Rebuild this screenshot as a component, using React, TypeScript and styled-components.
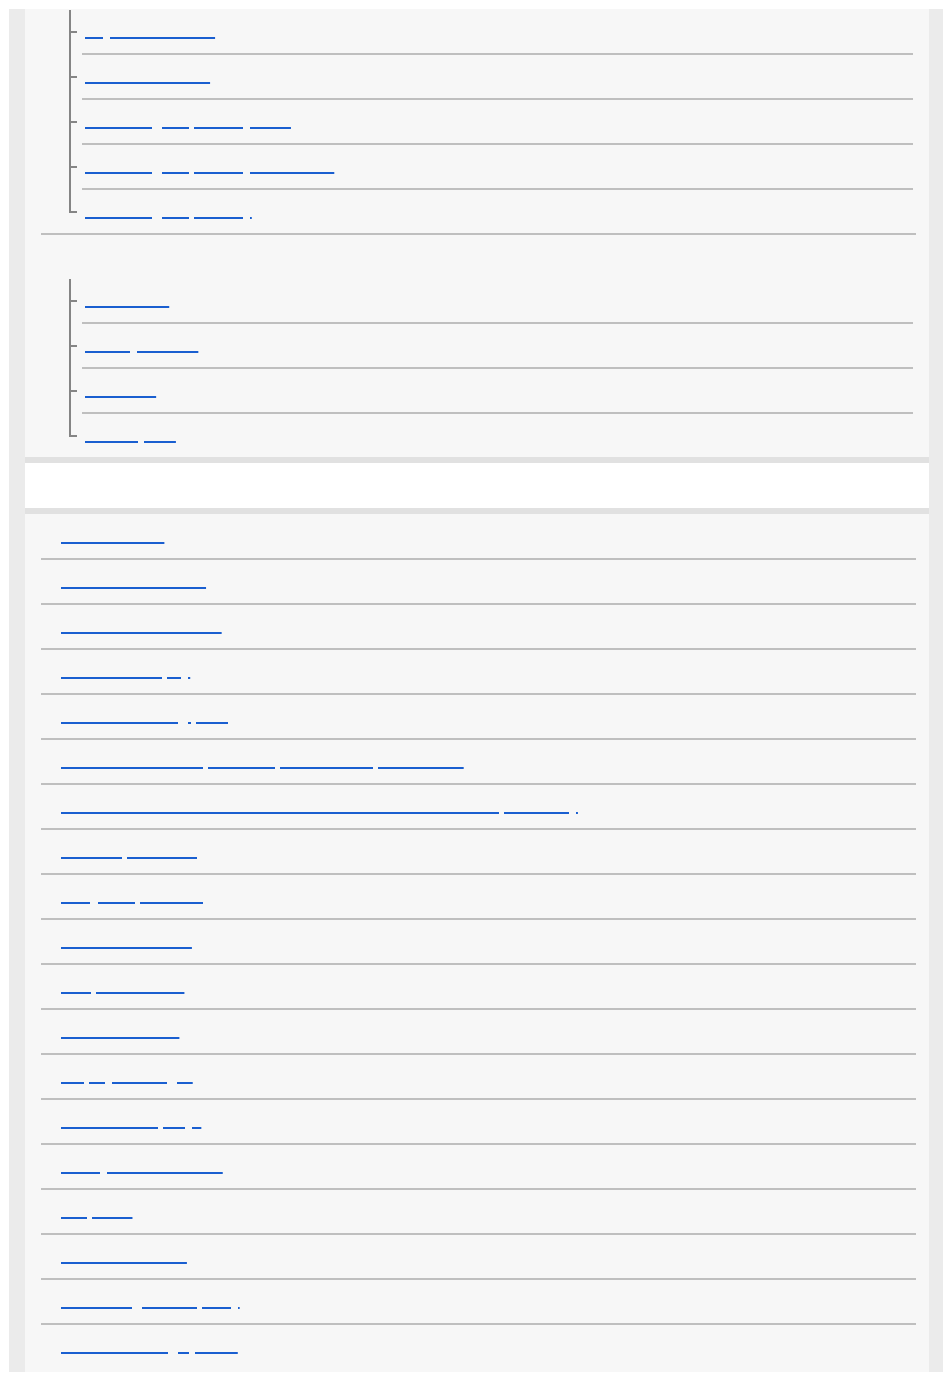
import React from "react";
import styled, { createGlobalStyle } from "styled-components";

const GlobalStyle = createGlobalStyle`
  html, body { background: #ffffff; }
  body {
    margin: 9px 7px 7px 9px;
    font-family: "Liberation Sans", Arial, sans-serif;
  }
  ul { list-style: none; margin: 0; padding: 0; }
`;

const Page = styled.div`
  background: #ebebeb;
  padding: 0 14px 0 16px;
`;

const Panel = styled.section<{ $pt?: number; $pb?: number }>`
  background: #f7f7f7;
  padding: ${(p) => p.$pt ?? 0}px 0 ${(p) => p.$pb ?? 0}px;
`;

const Band = styled.div`
  background: #ffffff;
  border-top: 6px solid #e1e1e1;
  border-bottom: 6px solid #e1e1e1;
  height: 45px;
  box-sizing: content-box;
  padding: 0 36px;
  font-size: 16px;
  line-height: 45px;
  font-weight: bold;
  color: transparent;
`;

const GroupList = styled.ul`
  margin: 0 13px 0 16px !important;
`;

const Group = styled.li`
  border-bottom: 2px solid #bfbfbf;
  &:last-child { border-bottom: none; }
`;

const GroupTitle = styled.div`
  padding: 11px 20px;
  font-size: 15px;
  line-height: 22px;
  font-weight: bold;
  color: transparent;
`;

const Tree = styled.ul`
  margin: 0 3px 0 28px !important;
`;

const TreeItem = styled.li`
  position: relative;
  margin-left: 13px;
  padding: 10px 0 11px 3px;
  line-height: 22px;
  border-bottom: 2px solid #bfbfbf;
  &:last-child { border-bottom: none; }
  &::before {
    content: "";
    position: absolute;
    left: -13px;
    top: 0;
    bottom: -2px;
    width: 2px;
    background: #858585;
  }
  &:last-child::before { bottom: auto; height: 23px; }
  &::after {
    content: "";
    position: absolute;
    left: -11px;
    top: 21px;
    width: 6px;
    height: 2px;
    background: #858585;
  }
`;

const Row = styled.li`
  padding: 10px 0 11px 20px;
  line-height: 22px;
  border-bottom: 2px solid #bfbfbf;
  &:last-child { border-bottom: none; }
`;

const Link = styled.a`
  font-size: 15px;
  color: transparent;
  text-decoration: underline;
  text-decoration-color: #1a5fd0;
  text-decoration-thickness: 1.5px;
`;

const groups: { title?: string; items: string[] }[] = [
  {
    items: [
      "Day Time Schedule",
      "Auto Shutter Mode",
      "Connecting the phone by Wi-Fi",
      "Connecting the phone by Wi-Fi Direct",
      "Connecting the phone by",
    ],
  },
  {
    title: "Other Settings",
    items: ["Auto Review", "Memory Formats", "Time Zone", "Photo Upload"],
  },
];

const topics = [
  "Names of Parts",
  "Menu Items Overview",
  "Monitor and Viewfinders",
  "Focus Area Display",
  "Remote Monitoring pairing",
  "Auto Shutter Release, Self-timer, Interval Timer, and Remote",
  "Remove the Cover and the Rear Lens Cover from the Lens Mount, Cautiously",
  "Favorites, Star Rating",
  "Dolby Tone, Recording",
  "Flash Control Mode",
  "Setup the Network",
  "Reset All Defaults",
  "Drop by Zooming In",
  "Time and Date, Days",
  "Gallery Slideshow Mode",
  "Beep Tone",
  "Auto Review Mode",
  "Transferring Content, Daily",
  "Remote Shooting Aperture",
];

export default function App() {
  return (
    <>
      <GlobalStyle />
      <Page>
        <Panel $pt={1}>
          <GroupList>
            {groups.map((g, gi) => (
              <Group key={gi}>
                {g.title && <GroupTitle>{g.title}</GroupTitle>}
                <Tree>
                  {g.items.map((t, i) => (
                    <TreeItem key={i}>
                      <Link href="#">{t}</Link>
                    </TreeItem>
                  ))}
                </Tree>
              </Group>
            ))}
          </GroupList>
        </Panel>
        <Band>Contents</Band>
        <Panel $pt={1} $pb={4}>
          <GroupList>
            {topics.map((t, i) => (
              <Row key={i}>
                <Link href="#">{t}</Link>
              </Row>
            ))}
          </GroupList>
        </Panel>
      </Page>
    </>
  );
}
